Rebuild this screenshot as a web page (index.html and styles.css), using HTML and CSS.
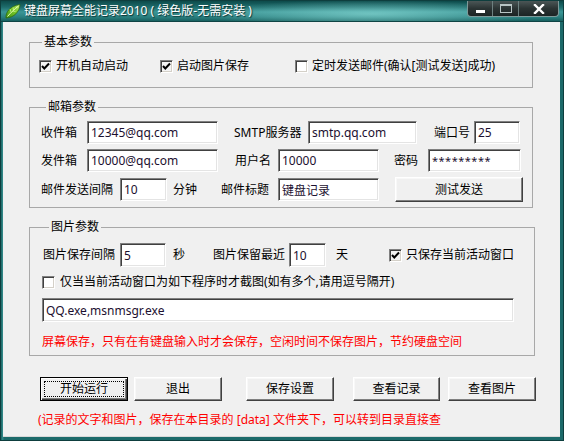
FILE: index.html
```html
<!DOCTYPE html>
<html lang="zh-CN">
<head>
<meta charset="utf-8">
<title>键盘屏幕全能记录2010</title>
<link rel="stylesheet" href="styles.css">
</head>
<body>
<div class="window">
  <div class="titlebar">
    <svg class="app-icon" width="16" height="16" viewBox="0 0 16 16">
      <defs>
        <linearGradient id="leaf" x1="0" y1="1" x2="1" y2="0">
          <stop offset="0" stop-color="#3f8f12"/>
          <stop offset="0.55" stop-color="#78c82a"/>
          <stop offset="1" stop-color="#c9f07a"/>
        </linearGradient>
      </defs>
      <path d="M1 15 C0.5 9 5 3 15 1.5 C14.5 9 9 14.5 1 15 Z" fill="url(#leaf)" stroke="#2d6a0c" stroke-width="0.8"/>
      <path d="M2.5 13.5 C5.5 10 9 6.5 13.5 3" fill="none" stroke="#e8ffb0" stroke-width="1"/>
      <path d="M6 9 L5 6 M8.5 7 L8 4.5 M7.5 8 L10.5 8.5" fill="none" stroke="#d8f7a0" stroke-width="0.7"/>
    </svg>
    <span class="title">键盘屏幕全能记录2010 ( 绿色版-无需安装 )</span>
    <div class="caption-buttons">
      <span class="cb cb-min"><i></i></span>
      <span class="cb cb-max"><i></i></span>
      <span class="cb cb-close">
        <svg width="12" height="10" viewBox="0 0 12 10"><path d="M2 1 L10 9 M10 1 L2 9" stroke="#fff" stroke-width="2.4" stroke-linecap="square"/></svg>
      </span>
    </div>
  </div>

  <div class="client">
    <fieldset class="group g-basic">
      <legend>基本参数</legend>
      <div class="row row-checks">
        <label class="check w121"><span class="box on"></span><span>开机自动启动</span></label>
        <label class="check w135"><span class="box on"></span><span>启动图片保存</span></label>
        <label class="check"><span class="box"></span><span>定时发送邮件(确认[测试发送]成功)</span></label>
      </div>
    </fieldset>

    <fieldset class="group g-mail">
      <legend>邮箱参数</legend>
      <div class="row row-in">
        <span class="lbl w46">收件箱</span>
        <span class="field w131">12345@qq.com</span>
        <span class="lbl w74 ml16">SMTP服务器</span>
        <span class="field w109">smtp.qq.com</span>
        <span class="lbl w40 ml17">端口号</span>
        <span class="field w46">25</span>
      </div>
      <div class="row row-in">
        <span class="lbl w46">发件箱</span>
        <span class="field w131">10000@qq.com</span>
        <span class="lbl w43 ml17">用户名</span>
        <span class="field w101">10000</span>
        <span class="lbl w34 ml15">密码</span>
        <span class="field w93 pw">*********</span>
      </div>
      <div class="row row-last">
        <span class="lbl w79">邮件发送间隔</span>
        <span class="field w47">10</span>
        <span class="lbl w48 ml6">分钟</span>
        <span class="lbl w57">邮件标题</span>
        <span class="field w101">键盘记录</span>
        <span class="btn w128 ml16 h25">测试发送</span>
      </div>
    </fieldset>

    <fieldset class="group g-pic">
      <legend>图片参数</legend>
      <div class="row row-pic1">
        <span class="lbl w77">图片保存间隔</span>
        <span class="field w46 tall">5</span>
        <span class="lbl w40 ml7">秒</span>
        <span class="lbl w76">图片保留最近</span>
        <span class="field w37 tall">10</span>
        <span class="lbl w53 ml10">天</span>
        <label class="check"><span class="box on"></span><span>只保存当前活动窗口</span></label>
      </div>
      <div class="row row-pic2">
        <label class="check gap5"><span class="box"></span><span>仅当当前活动窗口为如下程序时才截图(如有多个,请用逗号隔开)</span></label>
      </div>
      <div class="row row-pic3">
        <span class="field w472 tall">QQ.exe,msnmsgr.exe</span>
      </div>
      <div class="row row-pic4">
        <span class="note">屏幕保存，只有在有键盘输入时才会保存，空闲时间不保存图片，节约硬盘空间</span>
      </div>
    </fieldset>

    <div class="buttons">
      <span class="btn default w88"><span class="focus">开始运行</span></span>
      <span class="btn w88 ml6">退出</span>
      <span class="btn w88 ml24">保存设置</span>
      <span class="btn w87 ml19">查看记录</span>
      <span class="btn w88 ml8">查看图片</span>
    </div>
    <div class="footer-note">(记录的文字和图片，保存在本目录的 [data] 文件夹下，可以转到目录直接查</div>
  </div>
</div>
</body>
</html>
```

FILE: styles.css
```css
* { box-sizing: border-box; }
html, body { margin: 0; padding: 0; }
body {
  width: 564px;
  height: 441px;
  overflow: hidden;
  font-family: "Noto Sans", "Noto Sans CJK SC", sans-serif;
  font-size: 12px;
  color: #000;
  background: #1f6b6b;
}

.window {
  width: 564px;
  height: 441px;
  display: flex;
  flex-direction: column;
  background: linear-gradient(to right, #175a5a 0, #2f8585 1px, #2f8585 2px, #1c6a6a 3px, #1c6a6a 100%);
  border: 1px solid #0e3e3e;
}

/* ---------- title bar ---------- */
.titlebar {
  height: 21px;
  display: flex;
  align-items: center;
  padding-left: 4px;
  background:
    radial-gradient(ellipse 170px 14px at 370px 13px, rgba(150,230,225,0.6), rgba(150,230,225,0) 100%),
    linear-gradient(to bottom, #0d4b4b 0%, #1d6b6b 30%, #3b9696 55%, #2a8080 80%, #17605f 100%);
  border-bottom: 1px solid #0f4444;
}
.app-icon { flex: none; }
.title {
  margin-left: 3px;
  color: #fff;
  font-size: 12px;
  line-height: 16px;
  text-shadow: 1px 1px 1px #0a3030;
  white-space: nowrap;
}
.caption-buttons {
  margin-left: auto;
  margin-right: 4px;
  align-self: flex-start;
  display: flex;
  height: 16px;
  border: 1px solid #7e9a9a;
  border-top: none;
  border-radius: 0 0 4px 4px;
  overflow: hidden;
  background: linear-gradient(to bottom, #4b5656 0%, #2b3434 50%, #1c2424 100%);
}
.cb {
  display: flex;
  align-items: center;
  justify-content: center;
  height: 100%;
  border-right: 1px solid #6d8080;
}
.cb:last-child { border-right: none; }
.cb-min { width: 25px; }
.cb-min i { display: block; width: 9px; height: 3px; background: #fff; margin-top: 5px; }
.cb-max { width: 26px; }
.cb-max i { display: block; width: 12px; height: 9px; border: 1px solid #b8c4c4; border-top-width: 2px; }
.cb-close { width: 39px; }

/* ---------- client ---------- */
.client {
  flex: 1;
  margin: 0 3px 3px 2px;
  background: #f0f0f0;
  padding: 12px 0 0 26px;
  border-bottom: 1px solid #d8d8d8;
}

.group {
  margin: 0;
  padding: 0;
  min-inline-size: 0;
  width: 504px;
  border: 1px solid #a8a8a8;
}
.group legend {
  padding: 0 2px;
  line-height: 16px;
  margin-left: 3px;
}
.g-basic { padding: 8px 0 13px 9px; }
.g-mail { margin-top: 11px; padding: 6px 0 5px 11px; }
.g-mail legend { margin-left: 5px; }
.g-pic { margin-top: 11px; padding: 8px 0 5px 12px; width: 506px; }
.g-pic legend { margin-left: 7px; }

.row { display: flex; align-items: center; white-space: nowrap; }
.row-checks { height: 16px; }
.row-in { height: 23px; margin-bottom: 5px; }
.row-last { height: 25px; }
.row-pic1 { height: 24px; padding-left: 1px; }
.row-pic2 { height: 16px; margin-top: 7px; }
.row-pic3 { height: 24px; margin-top: 8px; }
.row-pic4 { height: 16px; margin-top: 12px; }

.lbl { flex: none; line-height: 16px; }

/* check boxes */
.check { display: flex; align-items: center; flex: none; line-height: 16px; }
.check .box {
  flex: none;
  width: 13px;
  height: 13px;
  margin-right: 4px;
  background: #fff;
  border-top: 1px solid #808080;
  border-left: 1px solid #808080;
  border-bottom: 1px solid #ffffff;
  border-right: 1px solid #ffffff;
  box-shadow: inset 1px 1px 0 #404040, inset -1px -1px 0 #d4d0c8;
}
.check .box.on {
  background: #f4f4f4 url("data:image/svg+xml;utf8,<svg xmlns='http://www.w3.org/2000/svg' width='11' height='11'><path d='M2 5 L4.3 7.5 L9 2.5' fill='none' stroke='black' stroke-width='2'/></svg>") center/11px 11px no-repeat;
}
.gap5 .box { margin-right: 5px; }

/* text fields */
.field {
  flex: none;
  height: 23px;
  display: flex;
  align-items: center;
  padding: 0 3px;
  background: #fff;
  color: #1c1030;
  font-size: 12px;
  border-top: 1px solid #808080;
  border-left: 1px solid #808080;
  border-bottom: 1px solid #ffffff;
  border-right: 1px solid #ffffff;
  box-shadow: inset 1px 1px 0 #404040, inset -1px -1px 0 #e4e4e4;
  overflow: hidden;
}
.field.tall { height: 24px; }
.field.pw { align-items: flex-start; padding-top: 3px; letter-spacing: 0.5px; font-size: 11px; }

/* buttons */
.btn {
  flex: none;
  height: 24px;
  display: flex;
  align-items: center;
  justify-content: center;
  background: #f0f0f0;
  border-top: 1px solid #ffffff;
  border-left: 1px solid #ffffff;
  border-bottom: 1px solid #404040;
  border-right: 1px solid #404040;
  box-shadow: inset -1px -1px 0 #808080, inset 1px 1px 0 #f8f8f8;
  line-height: 16px;
}
.btn.h25 { height: 25px; }
.btn.default {
  border: 1px solid #000;
  box-shadow: inset 1px 1px 0 #ffffff, inset -1px -1px 0 #404040, inset -2px -2px 0 #808080;
  padding: 3px;
}
.btn .focus {
  flex: 1;
  align-self: stretch;
  display: flex;
  align-items: center;
  justify-content: center;
  border: 1px dotted #000;
}

.buttons { display: flex; margin-top: 21px; padding-left: 11px; }
.note { color: #ff0000; line-height: 16px; }
.footer-note {
  margin-top: 11px;
  margin-left: 9px;
  color: #ff0000;
  line-height: 16px;
  white-space: nowrap;
}

/* widths / offsets */
.w34 { width: 34px; } .w37 { width: 37px; } .w40 { width: 40px; } .w43 { width: 43px; }
.w46 { width: 46px; } .w47 { width: 47px; } .w48 { width: 48px; } .w53 { width: 53px; }
.w57 { width: 57px; } .w74 { width: 74px; } .w76 { width: 76px; } .w77 { width: 77px; }
.w79 { width: 79px; } .w87 { width: 87px; } .w88 { width: 88px; } .w93 { width: 93px; }
.w101 { width: 101px; } .w109 { width: 109px; } .w121 { width: 121px; } .w128 { width: 128px; }
.w131 { width: 131px; } .w135 { width: 135px; } .w472 { width: 472px; }
.ml6 { margin-left: 6px; } .ml7 { margin-left: 7px; } .ml8 { margin-left: 8px; }
.ml10 { margin-left: 10px; } .ml15 { margin-left: 15px; } .ml16 { margin-left: 16px; }
.ml17 { margin-left: 17px; } .ml19 { margin-left: 19px; } .ml24 { margin-left: 24px; }
```
